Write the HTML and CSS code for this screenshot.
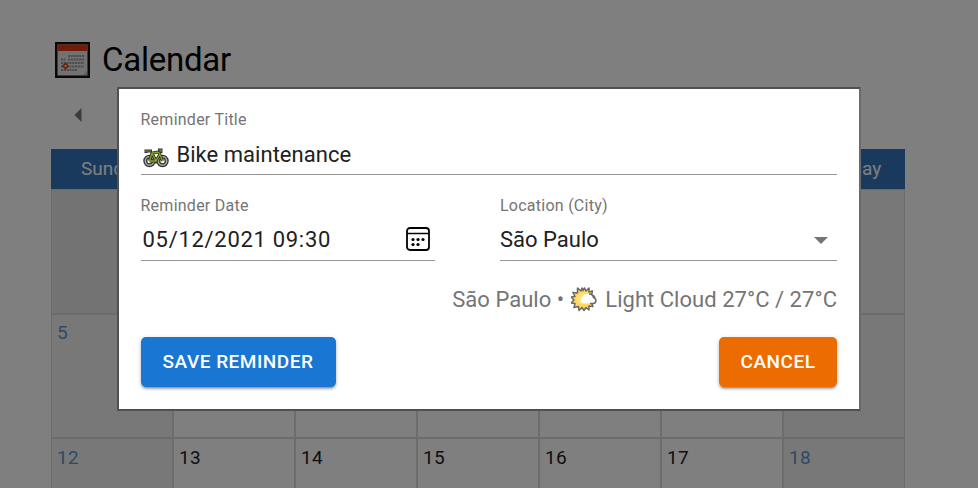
FILE: index.html
```html
<!DOCTYPE html>
<html lang="en">
<head>
<meta charset="utf-8">
<title>Calendar</title>
<link rel="stylesheet" href="styles.css">
</head>
<body>
<main class="page">
  <header class="heading">
    <svg class="logo" viewBox="0 0 35 36">
      <path fill="#111" d="M0 0h35v36H0z"/>
      <path fill="#e4e4e4" d="M2.500 2.500h30v31h-30z"/>
      <path fill="#e23a18" d="M2.500 2.500h30V9h-30z"/>
      <g stroke="#999" stroke-width="2.200" stroke-dasharray="2.100 .7">
        <path d="M13 14h16M13 17.500h16M6 17.500h4.500M6 21h23M6 24.500h23M6 28h16"/>
      </g>
      <path d="M10.500 21.500 13 24l-2.500 2.500L8 24z" fill="#e4e4e4" stroke="#e23a18" stroke-width="1.600"/>
      <path fill="#bbb" d="M32 29v4h-4z"/>
    </svg>
    <h1>Calendar</h1>
  </header>
  <nav class="month-nav"><svg class="prev" viewBox="0 0 7 14"><path d="M7 0v14L0 7z"/></svg></nav>
  <section class="calendar">
    <div class="day-name">Sunday</div><div class="day-name">Monday</div><div class="day-name">Tuesday</div><div class="day-name">Wednesday</div><div class="day-name">Thursday</div><div class="day-name">Friday</div><div class="day-name">Saturday</div>
    <div class="cell outside"></div><div class="cell outside"></div><div class="cell outside"></div><div class="cell">1</div><div class="cell">2</div><div class="cell">3</div><div class="cell weekend">4</div>
    <div class="cell weekend">5</div><div class="cell">6</div><div class="cell">7</div><div class="cell">8</div><div class="cell">9</div><div class="cell">10</div><div class="cell weekend">11</div>
    <div class="cell last weekend">12</div><div class="cell last">13</div><div class="cell last">14</div><div class="cell last">15</div><div class="cell last">16</div><div class="cell last">17</div><div class="cell last weekend">18</div>
  </section>
</main>
<div class="overlay">
  <form class="dialog">
    <div class="field">
      <span class="label title-label">Reminder Title</span>
      <div class="value title">
        <svg class="bike" viewBox="0 0 26 20">
          <g fill="none" stroke="#333" stroke-width="4"><circle cx="6.500" cy="13" r="4.200"/><circle cx="19.500" cy="13" r="4.200"/></g>
          <g fill="none" stroke="#aaa" stroke-width="1.500"><circle cx="6.500" cy="13" r="4.200"/><circle cx="19.500" cy="13" r="4.200"/></g>
          <path d="M6.500 13 9 5l7-1 3.500 9M9 5l4 8 4-7M6.500 13H13" fill="none" stroke="#293315" stroke-width="3"/>
          <path d="M6.500 13 9 5l7-1 3.500 9M9 5l4 8 4-7M6.500 13H13" fill="none" stroke="#84a82d" stroke-width="1.300"/>
          <path d="M3 5V3h6M15 2h3v3" fill="none" stroke="#333" stroke-width="3"/>
          <path d="M3 4V3h5M16 2h2v2" fill="none" stroke="#a47b3c" stroke-width="1.200"/>
        </svg>
        <span class="title-text">Bike maintenance</span>
      </div>
    </div>
    <div class="row">
      <div class="field">
        <span class="label">Reminder Date</span>
        <div class="value date">
          <span class="date-text">05/12/2021 09:30</span>
          <svg class="picker" viewBox="0 0 24 24">
            <rect x="1" y="1" width="22" height="22" rx="3" fill="none" stroke="#000" stroke-width="1.800"/>
            <path d="M1 6.500h22" stroke="#000" stroke-width="1.500"/>
            <g><circle cx="7" cy="12.500" r="1.600"/><circle cx="12" cy="12.500" r="1.600"/><circle cx="17" cy="12.500" r="1.600"/><circle cx="7" cy="17.500" r="1.600"/><circle cx="12" cy="17.500" r="1.600"/></g>
          </svg>
        </div>
      </div>
      <div class="field">
        <span class="label">Location (City)</span>
        <div class="value city">
          <span class="city-text">São Paulo</span>
          <svg class="caret" viewBox="0 0 14 7"><path d="M0 0h14L7 7z"/></svg>
        </div>
      </div>
    </div>
    <div class="weather">
      <span class="place">São Paulo •</span>
      <svg class="sun" viewBox="0 0 26 26">
        <path fill="#ffd75e" stroke="#686868" stroke-width="1.500" stroke-linejoin="round" d="M12 4.500 13.500 2l1.500 3 3-3v4l3.500-1-1 4 3 1.500L21 13l2 2.500-2.500 1 1.500 4-4-.5v4l-3-2.500-2 3-2-3-3 3-.5-4-4.500 1 1-4-4-.5 3-3-3-3 4-.5-2-4 4.500.5L6.500 2l3.500 3 1-3z"/>
        <circle cx="11" cy="12.500" r="5.500" fill="#ffe07a"/>
        <path fill="#fff" stroke="#fff" d="M12.500 17a3 3 0 0 1-1-5.500 5 5 0 0 1 7-3 4 4 0 0 1 4 3.500c3.500 1 2.500 5 0 5z"/>
        <path fill="none" stroke="#686868" stroke-width="1.500" d="M18 8a4 4 0 0 1 4.500 3.500c3.500 1 3 6-.5 6h-3"/>
      </svg>
      <span class="forecast">Light Cloud 27°C / 27°C</span>
    </div>
    <div class="actions">
      <button type="button" class="button save"><span>SAVE REMINDER</span></button>
      <button type="button" class="button cancel"><span>CANCEL</span></button>
    </div>
  </form>
</div>
</body>
</html>
```
FILE: styles.css
```css
* { box-sizing: border-box; }
html, body { height: 100%; margin: 0; overflow: hidden; }
body { background: #fff; color: #000; font-family: Roboto, sans-serif; }
svg { display: block; flex: none; }

.page { padding: 42px 73px 0 51px; }
.heading { display: flex; align-items: flex-start; height: 62px; padding-left: 4px; }
.logo { width: 35px; height: 36px; }
h1 { margin: -2px 0 0 12px; font-size: 33px; line-height: 40px; font-weight: 400; letter-spacing: -.25px; }
.month-nav { height: 45px; padding: 4px 0 0 23px; }
.prev { width: 8px; height: 14px; fill: #777; }

.calendar {
  display: grid;
  grid-template-columns: repeat(7, 122px);
  grid-template-rows: 40px 125px 124px 50px;
}
.day-name { background: #3475ba; color: #fff; font-size: 19px; line-height: 40px; text-align: center; }
.cell { border: 1px solid #d8d8d8; padding: 6px 5px; font-size: 19px; line-height: 24px; letter-spacing: .2px; color: #212121; }
.last { border-bottom: 0; padding-top: 7px; }
.weekend { background: #f0f0f0; color: #6096c4; }
.outside { background: #e6e6e6; }

.overlay {
  position: fixed;
  inset: 0;
  display: flex;
  align-items: flex-start;
  justify-content: center;
  padding-top: 87px;
  background: rgba(0, 0, 0, .5);
}
.dialog {
  width: 744px;
  height: 324px;
  border: 2px solid;
  border-color: #505050 #6a6a6a #505050 #505050;
  padding: 20px 22px 20px 21.500px;
  background: #fff;
}
.label { display: block; height: 22px; font-size: 16px; line-height: 22px; letter-spacing: .25px; color: #757575; }
.value { display: flex; height: 44px; border-bottom: 1px solid #949494; color: #212121; font-size: 22px; line-height: 45px; }
.title { line-height: 48px; }
.bike { width: 26px; height: 20px; margin: 17px 8px 0 2px; }
.title-text { letter-spacing: .03px; }
.row { display: grid; grid-template-columns: 294px 337px; justify-content: space-between; margin-top: 20px; }
.date { justify-content: space-between; padding: 0 5px 0 2px; }
.date-text { letter-spacing: .7px; }
.city { justify-content: space-between; padding-right: 9px; }
.picker { width: 24px; height: 24px; margin-top: 10px; }
.caret { width: 14px; height: 7px; margin-top: 20px; fill: #757575; }
.weather { display: flex; justify-content: flex-end; height: 76px; padding-top: 24px; font-size: 22px; line-height: 30px; letter-spacing: .03px; color: #757575; }
.sun { width: 26px; height: 26px; margin: 1px 8px 0 7px; }
.actions { display: flex; justify-content: space-between; }
.button { height: 50px; border: 0; border-radius: 5px; padding: 0; color: #fff; font: 500 19px/50px Roboto, sans-serif; letter-spacing: .5px; box-shadow: 0 3px 2px -2px #0004, 0 2px 3px #0003, 0 1px 5px #0002; }
.save { width: 195px; background: #1976d2; }
.cancel { width: 118px; background: #ed6c02; }
```
